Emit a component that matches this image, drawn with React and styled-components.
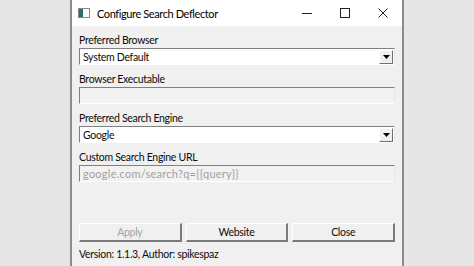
import React from 'react';
import styled, { createGlobalStyle } from 'styled-components';

const GlobalStyle = createGlobalStyle`
  html, body {
    margin: 0;
    padding: 0;
    background: #e6e6e6;
  }
  body {
    font-family: Lato, "Liberation Sans", sans-serif;
    letter-spacing: -0.3px;
  }
`;

const Page = styled.div`
  width: 474px;
  height: 266px;
  overflow: hidden;
  display: flex;
  justify-content: center;
  background: #e6e6e6;
`;

const Window = styled.div`
  width: 330px;
  height: 290px;
  background: #f0f0f0;
  border-left: 2px solid #8c8c8c;
  border-right: 2px solid #8c8c8c;
  display: flex;
  flex-direction: column;
`;

const TitleBar = styled.div`
  height: 26px;
  background: #ffffff;
  display: flex;
  align-items: center;
  padding-left: 6px;
`;

const Title = styled.span`
  font-size: 11px;
  letter-spacing: -0.4px;
  color: #000;
  margin-left: 7px;
  flex: 1;
`;

const Controls = styled.div`
  display: flex;
  height: 100%;
`;

const ControlButton = styled.div`
  width: 38px;
  height: 100%;
  display: flex;
  align-items: center;
  justify-content: center;
`;

const Body = styled.div`
  flex: 1;
  padding: 6px 7px 0 7px;
  display: flex;
  flex-direction: column;
`;

const Field = styled.div`
  display: flex;
  flex-direction: column;
  margin-bottom: 6px;
`;

const Label = styled.div`
  font-size: 10.5px;
  color: #0c0c0c;
  height: 16px;
  line-height: 16px;
`;

const Box = styled.div`
  height: 17px;
  box-sizing: border-box;
  border-top: 1px solid #808080;
  border-left: 1px solid #808080;
  border-right: 1px solid #e8e8e8;
  border-bottom: 1px solid #ffffff;
  background: ${p => (p.$disabled ? '#f2f2f2' : '#ffffff')};
  display: flex;
  align-items: center;
  padding-left: 3px;
  font-size: 10.5px;
  color: ${p => (p.$disabled ? '#a0a0a0' : '#0c0c0c')};
`;

const BoxText = styled.span`
  flex: 1;
  white-space: nowrap;
`;

const Placeholder = styled(BoxText)`
  font-size: 11px;
  letter-spacing: 0.25px;
`;

const DropButton = styled.div`
  width: 14px;
  height: 14px;
  box-sizing: border-box;
  margin-right: 1px;
  background: #f0f0f0;
  border-top: 1px solid #ffffff;
  border-left: 1px solid #ffffff;
  border-right: 1px solid #707070;
  border-bottom: 1px solid #707070;
  display: flex;
  align-items: center;
  justify-content: center;
`;

const Spacer = styled.div`
  height: 35px;
`;

const ButtonRow = styled.div`
  display: grid;
  grid-template-columns: 1fr 1fr 1fr;
  gap: 4px;
  height: 19px;
`;

const Button = styled.div`
  box-sizing: border-box;
  border-top: 1px solid #ffffff;
  border-left: 1px solid #ffffff;
  border-right: 2px solid #7a7a7a;
  border-bottom: 2px solid #7a7a7a;
  display: flex;
  align-items: center;
  justify-content: center;
  font-size: 10.5px;
  color: ${p => (p.$disabled ? '#a3a3a3' : '#0c0c0c')};
`;

const Footer = styled.div`
  font-size: 10.5px;
  color: #0c0c0c;
  height: 18px;
  line-height: 18px;
  margin-top: 3px;
`;

function AppIcon() {
  return (
    <svg width="12" height="10" viewBox="0 0 12 10">
      <rect x="0.5" y="0.5" width="11" height="9" fill="#fff" stroke="#8a8a8a" />
      <rect x="1" y="1" width="4" height="8" fill="#2f6d6a" />
    </svg>
  );
}

function Caret() {
  return (
    <svg width="7" height="4" viewBox="0 0 7 4">
      <path d="M0 0 H7 L3.5 4 Z" fill="#000" />
    </svg>
  );
}

function Select({ value }) {
  return (
    <Box>
      <BoxText>{value}</BoxText>
      <DropButton>
        <Caret />
      </DropButton>
    </Box>
  );
}

export default function App() {
  return (
    <Page>
      <GlobalStyle />
      <Window>
        <TitleBar>
          <AppIcon />
          <Title>Configure Search Deflector</Title>
          <Controls>
            <ControlButton>
              <svg width="10" height="10" viewBox="0 0 10 10">
                <path d="M0 5.5 H10" stroke="#222" strokeWidth="1" />
              </svg>
            </ControlButton>
            <ControlButton>
              <svg width="10" height="10" viewBox="0 0 10 10">
                <rect x="0.5" y="0.5" width="9" height="9" fill="none" stroke="#222" />
              </svg>
            </ControlButton>
            <ControlButton>
              <svg width="10" height="10" viewBox="0 0 10 10">
                <path d="M0.5 0.5 L9.5 9.5 M9.5 0.5 L0.5 9.5" stroke="#222" strokeWidth="1" />
              </svg>
            </ControlButton>
          </Controls>
        </TitleBar>
        <Body>
          <Field>
            <Label>Preferred Browser</Label>
            <Select value="System Default" />
          </Field>
          <Field>
            <Label>Browser Executable</Label>
            <Box $disabled />
          </Field>
          <Field>
            <Label>Preferred Search Engine</Label>
            <Select value="Google" />
          </Field>
          <Field>
            <Label>Custom Search Engine URL</Label>
            <Box $disabled>
              <Placeholder>google.com/search?q={'{{query}}'}</Placeholder>
            </Box>
          </Field>
          <Spacer />
          <ButtonRow>
            <Button $disabled>Apply</Button>
            <Button>Website</Button>
            <Button>Close</Button>
          </ButtonRow>
          <Footer>Version: 1.1.3, Author: spikespaz</Footer>
        </Body>
      </Window>
    </Page>
  );
}
